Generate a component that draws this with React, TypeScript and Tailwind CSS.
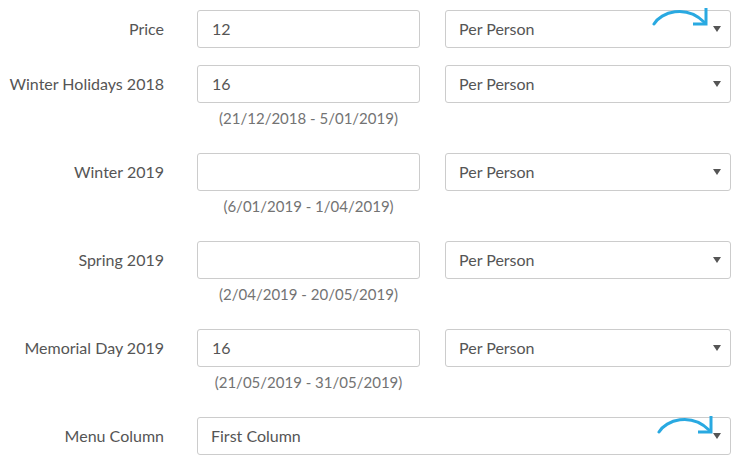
import { ReactNode } from "react";

type Row = {
  label: string;
  value: string;
  range?: string;
};

const rows: Row[] = [
  { label: "Price", value: "12" },
  { label: "Winter Holidays 2018", value: "16", range: "(21/12/2018 - 5/01/2019)" },
  { label: "Winter 2019", value: "", range: "(6/01/2019 - 1/04/2019)" },
  { label: "Spring 2019", value: "", range: "(2/04/2019 - 20/05/2019)" },
  { label: "Memorial Day 2019", value: "16", range: "(21/05/2019 - 31/05/2019)" },
];

function Caret() {
  return (
    <svg width="8" height="6" viewBox="0 0 8 6" className="absolute right-[9px] top-1/2 -translate-y-1/2">
      <path d="M0 0 H8 L4 6 Z" fill="#555" />
    </svg>
  );
}

// blue hint arrow drawn over the select
function HintArrow({ className }: { className: string }) {
  return (
    <svg width="56" height="20" viewBox="0 0 56 20" className={"pointer-events-none absolute " + className}>
      <path d="M2 17 C 9 5, 34 -3, 52 15" fill="none" stroke="#29a9e1" strokeWidth="3" strokeLinecap="round" />
      <path d="M54 1 V17 H41" fill="none" stroke="#29a9e1" strokeWidth="3" />
    </svg>
  );
}

function Select({ value, arrow, wide }: { value: string; arrow?: boolean; wide?: boolean }) {
  return (
    <div
      className={
        "relative flex h-[38px] items-center rounded-[3px] border border-[#ccc] bg-white pl-[13px] text-[#555] " +
        (wide ? "w-[534px]" : "w-[286px]")
      }
    >
      {value}
      <Caret />
      {arrow && <HintArrow className={wide ? "left-[459px] top-[-3px]" : "left-[206px] top-[-4px]"} />}
    </div>
  );
}

function Field({ label, children }: { label: string; children: ReactNode }) {
  return (
    <div className="flex">
      <div className="flex h-[38px] w-[164px] shrink-0 items-center justify-end text-[#555]">{label}</div>
      <div className="ml-[33px]">{children}</div>
    </div>
  );
}

export default function App() {
  return (
    <div
      className="h-[466px] w-[739px] overflow-hidden bg-white pt-[10px] text-[16px]"
      style={{ fontFamily: "Lato, 'Open Sans', sans-serif" }}
    >
      <div className="flex flex-col gap-[17px]">
        {rows.map((r, i) => (
          <Field key={r.label} label={r.label}>
            <div className="flex gap-[25px]">
              <div className="w-[223px]">
                <div className="flex h-[38px] items-center rounded-[3px] border border-[#ccc] px-[14px] text-[#555]">
                  {r.value}
                </div>
                {r.range && (
                  <div className="h-[33px] pt-[4px] text-center text-[15px] leading-[22px] text-[#737373]">
                    {r.range}
                  </div>
                )}
              </div>
              <Select value="Per Person" arrow={i === 0} />
            </div>
          </Field>
        ))}
        <Field label="Menu Column">
          <Select value="First Column" arrow wide />
        </Field>
      </div>
    </div>
  );
}
